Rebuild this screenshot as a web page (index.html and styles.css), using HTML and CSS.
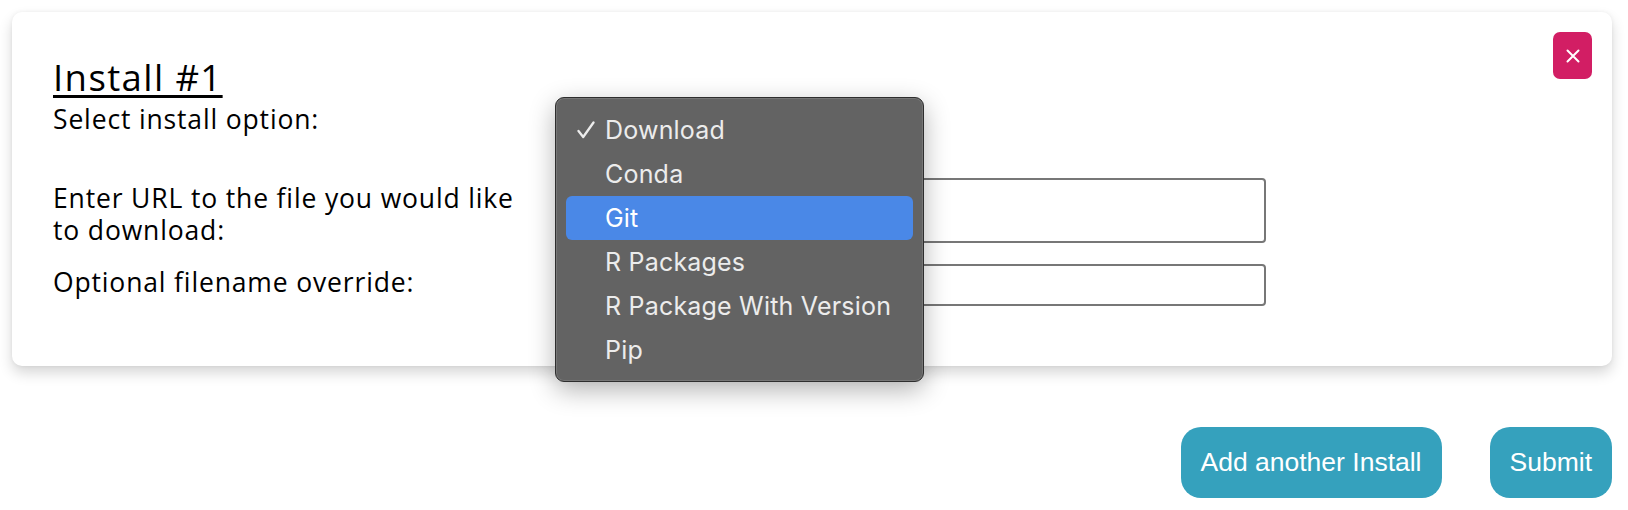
FILE: index.html
```html
<!DOCTYPE html>
<html lang="en">
<head>
<meta charset="utf-8">
<title>Install</title>
<link rel="stylesheet" href="styles.css">
</head>
<body>
<main class="page">
  <section class="card">
    <header class="card-head">
      <h2 class="title">Install #1</h2>
      <button class="close" type="button" aria-label="Remove install">
        <svg width="14" height="14" viewBox="0 0 14 14"><path d="M1.5 1.5 L12.5 12.5 M12.5 1.5 L1.5 12.5" stroke="#fff" stroke-width="2" stroke-linecap="round"/></svg>
      </button>
    </header>
    <div class="form">
      <label class="label row1">Select install option:</label>
      <div class="field row1"><div class="select-stub"></div></div>
      <label class="label row2 offset">Enter URL to the file you would like to download:</label>
      <div class="field row2"><div class="input tall"></div></div>
      <label class="label row3 offset-sm">Optional filename override:</label>
      <div class="field row3"><div class="input"></div></div>
    </div>
    <ul class="menu">
      <li class="item"><span class="check"><svg width="18" height="18" viewBox="0 0 18 18"><path d="M1.5 10 L6.2 16 L16.5 1.5" fill="none" stroke="#ececec" stroke-width="2.3" stroke-linecap="round" stroke-linejoin="round"/></svg></span>Download</li>
      <li class="item"><span class="check"></span>Conda</li>
      <li class="item active"><span class="check"></span>Git</li>
      <li class="item"><span class="check"></span>R Packages</li>
      <li class="item"><span class="check"></span>R Package With Version</li>
      <li class="item"><span class="check"></span>Pip</li>
    </ul>
  </section>
  <div class="actions">
    <button class="btn" type="button">Add another Install</button>
    <button class="btn" type="button">Submit</button>
  </div>
</main>
</body>
</html>
```
FILE: styles.css
```css
* { box-sizing: border-box; }
html, body { margin: 0; padding: 0; background: #fff; }
body { width: 1628px; height: 510px; overflow: hidden; }

.page { padding: 12px 16px 0 12px; }

.card {
  position: relative;
  background: #fff;
  border-radius: 10px;
  box-shadow: 0 7px 14px rgba(0, 0, 0, 0.16), 0 0 4px rgba(0, 0, 0, 0.06);
  padding: 20px 20px 60px 41px;
  height: 354px;
}

.card-head {
  display: flex;
  justify-content: space-between;
  align-items: flex-start;
}

.title {
  margin: 23px 0 0 0;
  font-family: "Open Sans", "Noto Sans", sans-serif;
  font-weight: 400;
  font-size: 36.5px;
  letter-spacing: 1.4px;
  line-height: 44px;
  color: #000;
  text-decoration: underline;
  text-decoration-thickness: 3px;
  text-underline-offset: 4px;
}

.close {
  width: 39px;
  height: 47px;
  border: 0;
  border-radius: 7px;
  background: #d21e64;
  display: flex;
  align-items: center;
  justify-content: center;
  padding: 0;
}

.form {
  display: grid;
  grid-template-columns: 490px 696px;
  column-gap: 27px;
  margin-top: 4px;
}

.label {
  font-family: "Open Sans", "Noto Sans", sans-serif;
  font-size: 26.5px;
  letter-spacing: 0.85px;
  line-height: 32px;
  color: #000;
}
.label.offset { padding-top: 4px; }
.label.offset-sm { padding-top: 2px; }

.row1 { margin-bottom: 43px; }
.row2 { margin-bottom: 18px; }

.select-stub { height: 32px; }

.input {
  height: 42px;
  border: 2px solid #777;
  border-radius: 4px;
  background: #fff;
}
.input.tall { height: 65px; }

.menu {
  position: absolute;
  left: 543px;
  top: 85px;
  width: 369px;
  height: 285px;
  margin: 0;
  padding: 10px 10px 0 10px;
  list-style: none;
  background: #636363;
  border: 1px solid #2e2e2e;
  border-radius: 9px;
  box-shadow: inset 0 0 0 1px rgba(255, 255, 255, 0.12), 0 8px 26px rgba(0, 0, 0, 0.3);
  z-index: 5;
}

.item {
  display: flex;
  align-items: center;
  height: 44px;
  padding-left: 11px;
  border-radius: 6px;
  font-family: "Inter", "Liberation Sans", sans-serif;
  font-size: 25px;
  letter-spacing: 0.2px;
  color: #ececec;
}
.item.active { background: #4a88e7; color: #fff; }

.check {
  width: 28px;
  flex: none;
  display: flex;
  align-items: center;
}

.actions {
  display: flex;
  justify-content: flex-end;
  gap: 48px;
  margin-top: 61px;
}

.btn {
  height: 71px;
  padding: 0 20px;
  border: 0;
  border-radius: 20px;
  background: #35a1bd;
  color: #fff;
  font-family: "Liberation Sans", Arial, sans-serif;
  font-size: 26.5px;
}
```
